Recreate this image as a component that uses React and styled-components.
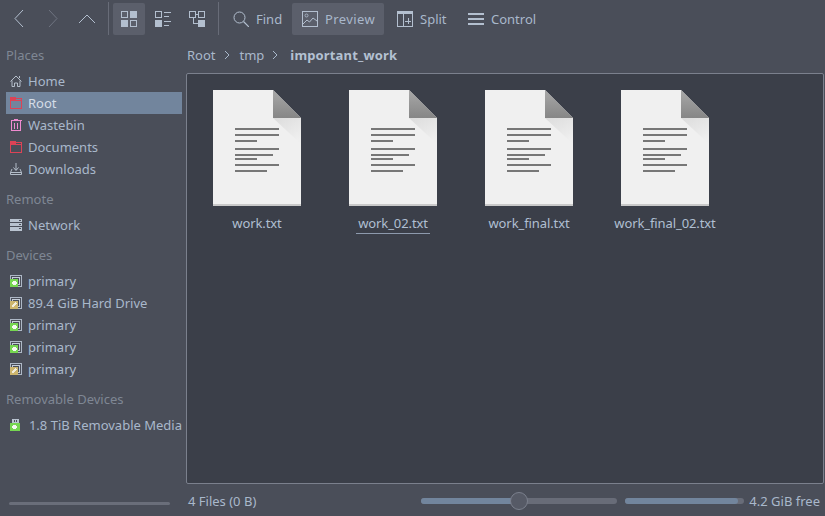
import React from 'react'
import styled, { createGlobalStyle } from 'styled-components'

const TEXT = '#a9b8cb'
const ICON = '#b3bfcf'
const PLACE = '#c0c9d6'

const GlobalStyle = createGlobalStyle`
  html, body { margin: 0; padding: 0; height: 100%; }
  body {
    background: #4a4e59;
    color: ${TEXT};
    font-family: "Noto Sans", "Open Sans", sans-serif;
    font-size: 13px;
    overflow: hidden;
  }
`

/* ---------- toolbar icons ---------- */
const Svg = ({ size = 16, children }) => (
  <svg width={size} height={size} viewBox={`0 0 ${size} ${size}`} fill="none" shapeRendering="crispEdges">
    {children}
  </svg>
)

const Outline = ({ x, y, s = 7 }) => <rect x={x + 0.5} y={y + 0.5} width={s - 1} height={s - 1} stroke={ICON} />
const Solid = ({ x, y, s = 7 }) => <rect x={x} y={y} width={s} height={s} fill={ICON} />

const Chevron = ({ dir, dim }) => {
  const d = { left: 'M12 1 L4 9.5 L12 18', right: 'M4 1 L12 9.5 L4 18', up: 'M0 14 L8 6 L16 14' }[dir]
  return (
    <svg width="16" height="20" viewBox="0 0 16 20" fill="none">
      <path d={d} stroke={dim ? '#6f7481' : ICON} strokeWidth="1" />
    </svg>
  )
}

const IconsView = () => (
  <Svg>
    <Outline x={0} y={0} /><Solid x={9} y={0} /><Solid x={0} y={9} /><Outline x={9} y={9} />
  </Svg>
)
const DetailsView = () => (
  <Svg>
    <Outline x={0} y={0} /><Solid x={0} y={9} />
    <path d="M9 1.5H16M9 5.5H14M9 10.5H16M9 14.5H14" stroke={ICON} />
  </Svg>
)
const TreeView = () => (
  <Svg>
    <Outline x={0} y={0} /><Outline x={9} y={0} /><Solid x={9} y={9} s={7} />
    <path d="M4 7V12H9M7 3.5H9" stroke={ICON} />
  </Svg>
)
const SearchIcon = () => (
  <svg width="16" height="16" viewBox="0 0 16 16" fill="none">
    <circle cx="6.5" cy="6.5" r="5.5" stroke={ICON} strokeWidth="1" />
    <path d="M10.5 10.5L16 16" stroke={ICON} strokeWidth="1.2" />
  </svg>
)
const PreviewIcon = () => (
  <svg width="16" height="16" viewBox="0 0 16 16" fill="none">
    <rect x="0.5" y="0.5" width="15" height="15" stroke={ICON} />
    <circle cx="4.5" cy="4.5" r="1.5" stroke={ICON} strokeWidth="0.8" />
    <path d="M1 13L5 9L7.5 11L11 7L15 10" stroke={ICON} strokeWidth="1" />
  </svg>
)
const SplitIcon = () => (
  <Svg>
    <rect x="0" y="0" width="16" height="3" fill={ICON} />
    <rect x="0.5" y="0.5" width="15" height="15" stroke={ICON} />
    <path d="M6.5 1V16M11 7V13M8 10H14" stroke={ICON} />
  </Svg>
)
const ControlIcon = () => (
  <Svg>
    <rect x="0" y="2" width="16" height="2" fill={ICON} />
    <rect x="0" y="7" width="16" height="2" fill={ICON} />
    <rect x="0" y="12" width="16" height="2" fill={ICON} />
  </Svg>
)

/* ---------- places icons, 12px ---------- */
const HomeIcon = () => (
  <svg width="12" height="12" viewBox="0 0 12 12" fill="none">
    <path d="M0.5 6.5L6 1L11.5 6.5M2 5.5V11.5H4.5V8H7.5V11.5H10V5.5M9.5 1V3" stroke={PLACE} strokeWidth="0.9" />
  </svg>
)
const FolderIcon = () => (
  <Svg size={12}>
    <path d="M0.5 1.5H11.5V11.5H0.5Z" stroke="#dc4356" />
    <rect x="0" y="0" width="6" height="3" fill="#dc4356" />
    <rect x="0" y="3" width="12" height="1" fill="#dc4356" />
  </Svg>
)
const TrashIcon = () => (
  <Svg size={12}>
    <path d="M0.5 1.5H11.5M1.5 2V11.5H10.5V2M4 0.5H8M4.5 3.5V9.5M7.5 3.5V9.5" stroke="#ef8bd0" />
  </Svg>
)
const DownloadIcon = () => (
  <svg width="12" height="12" viewBox="0 0 12 12" fill="none">
    <path d="M6 0V7M3.5 4.5L6 7.5L8.5 4.5" stroke={PLACE} strokeWidth="0.9" />
    <path d="M2 6L0.5 9.5V11.5H11.5V9.5L10 6M0.5 9.5H11.5" stroke={PLACE} strokeWidth="0.9" />
  </svg>
)
const NetworkIcon = () => (
  <Svg size={12}>
    <rect x="0" y="0" width="12" height="12" fill="#b9c3d0" />
    <path d="M0 3.5H12M0 7.5H12" stroke="#4a4e59" />
    <path d="M9 1.5H11M9 5.5H11M9 9.5H11" stroke="#4a4e59" />
  </Svg>
)
const DriveIcon = ({ yellow }) => (
  <Svg size={12}>
    <rect x="0.5" y="0.5" width="11" height="11" stroke="#aeb8c6" />
    <rect x="2.5" y="2.5" width="7" height="7" stroke="#c4ccd8" />
    <rect x="0" y="4" width="8" height="8" fill={yellow ? '#cdb56e' : '#76d651'} />
    {yellow
      ? <path d="M2 10L6 6" stroke="#f1ecdc" strokeWidth="2" />
      : <path d="M3 6H6V7H7V9H6V10H3V9H2V7H3Z" fill="#f4f8f0" />}
  </Svg>
)
const UsbIcon = () => (
  <Svg size={12}>
    <rect x="2" y="0" width="7" height="5" fill="#b9c3d0" />
    <rect x="4" y="1" width="1" height="2" fill="#4a4e59" />
    <rect x="6" y="1" width="1" height="2" fill="#4a4e59" />
    <rect x="0" y="4" width="10" height="8" fill="#76d651" />
    <path d="M3 6H6V7H7V9H6V10H3V9H2V7H3Z" fill="#f4f8f0" />
  </Svg>
)

const DocIcon = () => (
  <svg width="88" height="116" viewBox="0 0 88 116">
    <defs>
      <linearGradient id="foldGrad" x1="0" y1="0" x2="0" y2="1">
        <stop offset="0" stopColor="#a8a8a8" />
        <stop offset="1" stopColor="#868686" />
      </linearGradient>
      <linearGradient id="shadowGrad" x1="0" y1="0" x2="0.6" y2="1">
        <stop offset="0" stopColor="#dcdcdc" />
        <stop offset="1" stopColor="#efefef" />
      </linearGradient>
    </defs>
    <path d="M0 0H60L88 28V116H0Z" fill="#f0f0f0" />
    <path d="M60 28H88V54Z" fill="url(#shadowGrad)" />
    <path d="M60 0L88 28H60Z" fill="url(#foldGrad)" />
    <rect x="0" y="114" width="88" height="2" fill="#c9c9c9" />
    <g fill="#777">
      <rect x="22" y="38" width="44" height="2" />
      <rect x="22" y="44" width="44" height="2" />
      <rect x="22" y="50" width="22" height="2" />
      <rect x="22" y="58" width="44" height="2" />
      <rect x="22" y="64" width="38" height="2" />
      <rect x="22" y="68" width="22" height="2" />
      <rect x="22" y="74" width="44" height="2" />
      <rect x="22" y="80" width="32" height="2" />
    </g>
  </svg>
)

/* ---------- layout ---------- */
const Window = styled.div`
  width: 825px;
  height: 516px;
  display: flex;
  flex-direction: column;
  background: #4a4e59;
`
const Toolbar = styled.div`
  height: 36px;
  flex: none;
  box-sizing: border-box;
  padding: 3px 0 1px 3px;
  display: flex;
  align-items: stretch;
  gap: 2px;
`
const ToolIcon = styled.button`
  all: unset;
  width: 32px;
  display: flex;
  align-items: center;
  justify-content: center;
  border-radius: 2px;
  background: ${(p) => (p.$active ? '#5b5f6b' : 'transparent')};
`
const ToolText = styled.button`
  all: unset;
  box-sizing: border-box;
  width: ${(p) => p.$width}px;
  display: flex;
  align-items: center;
  gap: 7px;
  padding-left: ${(p) => p.$lead || 10}px;
  letter-spacing: ${(p) => (p.$active ? '0.4px' : '0')};
  border-radius: 2px;
  background: ${(p) => (p.$active ? '#5b5f6b' : 'transparent')};
`
const ToolSep = styled.div`
  width: 1px;
  margin: -1px 2px 0 3px;
  background: #686c78;
`
const Body = styled.div`
  flex: 1;
  display: flex;
  min-height: 0;
`
const Sidebar = styled.nav`
  width: 186px;
  flex: none;
  box-sizing: border-box;
  padding: 0 4px 0 6px;
  display: flex;
  flex-direction: column;
  position: relative;
`
const Heading = styled.div`
  height: 34px;
  padding: 9px 0 0;
  box-sizing: border-box;
  line-height: 20px;
  color: #7f8794;
  white-space: nowrap;
`
const Row = styled.div`
  height: 22px;
  display: flex;
  align-items: center;
  gap: ${(p) => p.$gap || 6}px;
  padding-left: 4px;
  white-space: nowrap;
  background: ${(p) => (p.$selected ? '#72859d' : 'transparent')};
  color: ${(p) => (p.$selected ? '#d5dde7' : TEXT)};
`
const SideScroll = styled.div`
  position: absolute;
  left: 9px;
  bottom: 11px;
  width: 161px;
  height: 3px;
  border-radius: 2px;
  background: #6a6e7a;
`
const Main = styled.main`
  flex: 1;
  min-width: 0;
  display: flex;
  flex-direction: column;
`
const Crumbs = styled.div`
  height: 37px;
  flex: none;
  box-sizing: border-box;
  padding: 0 0 0 1px;
  display: flex;
  align-items: center;
  gap: 8px;
`
const Crumb = styled.span`
  font-weight: ${(p) => (p.$current ? 700 : 400)};
  letter-spacing: ${(p) => (p.$current ? '0.15px' : '0')};
  margin-left: ${(p) => (p.$current ? '2px' : '0')};
  color: ${(p) => (p.$current ? '#b4c1d2' : TEXT)};
`
const CrumbArrowWrap = styled.span`
  display: flex;
  margin-right: 2px;
`
const Panel = styled.div`
  flex: 1;
  margin-right: 1px;
  min-height: 0;
  box-sizing: border-box;
  border: 1px solid #7b808d;
  border-radius: 2px;
  background: #3b3f49;
  padding: 16px 0 0 2px;
  display: flex;
  align-items: flex-start;
`
const FileItem = styled.div`
  width: 136px;
  display: flex;
  flex-direction: column;
  align-items: center;
`
const FileName = styled.span`
  margin-top: 8px;
  line-height: 18px;
  padding: 0 2.5px 1px;
  letter-spacing: -0.1px;
  color: #b0bfd2;
  border-bottom: 1px solid ${(p) => (p.$focused ? '#8d9aad' : 'transparent')};
`
const StatusBar = styled.footer`
  height: 32px;
  flex: none;
  display: flex;
  align-items: center;
  padding: 2px 5px 0 2px;
  box-sizing: border-box;
`
const Count = styled.span`
  flex: 1;
`
const Slider = styled.div`
  width: 196px;
  height: 6px;
  border-radius: 3px;
  background: #686c78;
  position: relative;
`
const SliderFill = styled.div`
  height: 100%;
  border-radius: 3px;
  background: #72859d;
`
const SliderThumb = styled.div`
  position: absolute;
  top: -6px;
  left: 89px;
  width: 16px;
  height: 16px;
  border: 1px solid #7b808d;
  border-radius: 50%;
  background: #565a66;
`
const Capacity = styled.div`
  width: 119px;
  height: 6px;
  margin: 0 5px 0 8px;
  border-radius: 3px;
  background: #686c78;
`

const places = [
  ['Home', <HomeIcon />],
  ['Root', <FolderIcon />, true],
  ['Wastebin', <TrashIcon />],
  ['Documents', <FolderIcon />],
  ['Downloads', <DownloadIcon />],
]
const devices = [
  ['primary', false],
  ['89.4 GiB Hard Drive', true],
  ['primary', false],
  ['primary', false],
  ['primary', true],
]
const files = ['work.txt', 'work_02.txt', 'work_final.txt', 'work_final_02.txt']

const CrumbArrow = () => (
  <CrumbArrowWrap>
    <svg width="6" height="10" viewBox="0 0 6 10" fill="none">
      <path d="M1 1L5 5L1 9" stroke={TEXT} />
    </svg>
  </CrumbArrowWrap>
)

export default function App() {
  return (
    <Window>
      <GlobalStyle />
      <Toolbar>
        <ToolIcon><Chevron dir="left" /></ToolIcon>
        <ToolIcon><Chevron dir="right" dim /></ToolIcon>
        <ToolIcon><Chevron dir="up" /></ToolIcon>
        <ToolSep />
        <ToolIcon $active><IconsView /></ToolIcon>
        <ToolIcon><DetailsView /></ToolIcon>
        <ToolIcon><TreeView /></ToolIcon>
        <ToolSep />
        <ToolText $width={67}><SearchIcon />Find</ToolText>
        <ToolText $width={92} $active><PreviewIcon />Preview</ToolText>
        <ToolText $width={70} $lead={11}><SplitIcon />Split</ToolText>
        <ToolText $width={87}><ControlIcon />Control</ToolText>
      </Toolbar>
      <Body>
        <Sidebar>
          <Heading>Places</Heading>
          {places.map(([name, icon, selected]) => (
            <Row key={name} $selected={selected}>{icon}{name}</Row>
          ))}
          <Heading>Remote</Heading>
          <Row><NetworkIcon />Network</Row>
          <Heading>Devices</Heading>
          {devices.map(([name, yellow], i) => (
            <Row key={i}><DriveIcon yellow={yellow} />{name}</Row>
          ))}
          <Heading>Removable Devices</Heading>
          <Row $gap={7}><UsbIcon />1.8 TiB Removable Media</Row>
          <SideScroll />
        </Sidebar>
        <Main>
          <Crumbs>
            <Crumb>Root</Crumb><CrumbArrow />
            <Crumb>tmp</Crumb><CrumbArrow />
            <Crumb $current>important_work</Crumb>
          </Crumbs>
          <Panel>
            {files.map((name) => (
              <FileItem key={name}>
                <DocIcon />
                <FileName $focused={name === 'work_02.txt'}>{name}</FileName>
              </FileItem>
            ))}
          </Panel>
          <StatusBar>
            <Count>4 Files (0 B)</Count>
            <Slider>
              <SliderFill style={{ width: '50%' }} />
              <SliderThumb />
            </Slider>
            <Capacity>
              <SliderFill style={{ width: `${(113 / 119) * 100}%` }} />
            </Capacity>
            <span>4.2 GiB free</span>
          </StatusBar>
        </Main>
      </Body>
    </Window>
  )
}
